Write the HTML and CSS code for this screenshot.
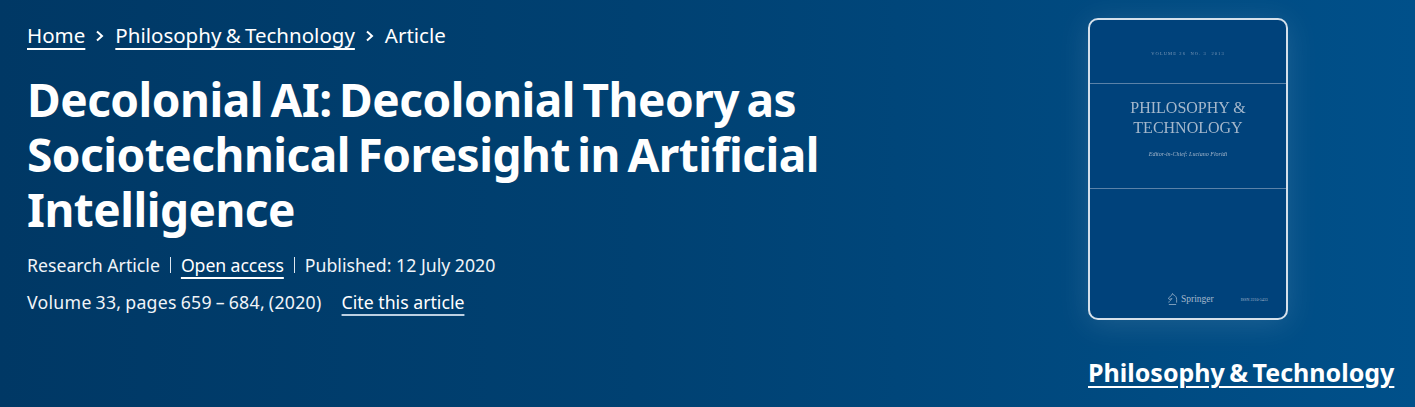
FILE: index.html
```html
<!DOCTYPE html>
<html lang="en">
<head>
  <meta charset="UTF-8" />
  <title>Decolonial AI</title>
  <link rel="stylesheet" href="styles.css">
</head>
<body>
  <header class="hero">
    <div class="main">
      <nav class="crumbs">
        <a href="#">Home</a>
        <svg class="chev" viewBox="0 0 10 14" width="10" height="14"><path d="M2 2.500l5 4.500-5 4.500" fill="none" stroke="#fff" stroke-width="2"/></svg>
        <a href="#">Philosophy &amp; Technology</a>
        <svg class="chev" viewBox="0 0 10 14" width="10" height="14"><path d="M2 2.500l5 4.500-5 4.500" fill="none" stroke="#fff" stroke-width="2"/></svg>
        <span>Article</span>
      </nav>
      <h1>Decolonial AI: Decolonial Theory as Sociotechnical Foresight in Artificial Intelligence</h1>
      <p class="meta">
        <span>Research Article</span><span class="bar"></span><a href="#">Open access</a><span class="bar"></span><span>Published: 12 July 2020</span>
      </p>
      <p class="meta second">
        <span class="pages">Volume 33, pages 659 – 684, (2020)</span><a class="cite" href="#">Cite this article</a>
      </p>
    </div>
    <aside class="journal">
      <div class="cover">
        <div class="vol">VOLUME 26 &nbsp;NO. 3 &nbsp;2013</div>
        <div class="band">
          <div class="cover-title">PHILOSOPHY &amp;<br>TECHNOLOGY</div>
          <div class="editor">Editor-in-Chief: Luciano Floridi</div>
        </div>
        <div class="foot">
          <svg class="horse" viewBox="0 0 12 14" width="11" height="14"><path d="M2 13h8M2 11c0-2 2.500-2.500 3.500-4.500L2.500 7.500 1.500 6 5 3l1-2 1 1.500c2 .5 3.500 2.500 3.500 5V11" fill="none" stroke="#a9bdd2" stroke-width="0.8"/></svg>
          <span class="springer">Springer</span>
          <span class="issn">ISSN 2210-5433</span>
        </div>
      </div>
      <a class="journal-name" href="#">Philosophy &amp; Technology</a>
    </aside>
  </header>
</body>
</html>
```

FILE: styles.css
```css
html, body {
  margin: 0;
  padding: 0;
}

body {
  font-family: "Noto Sans", "Open Sans", sans-serif;
  color: #fff;
  background: #004677;
}

a {
  color: #fff;
  text-decoration: underline;
  text-decoration-thickness: 1.5px;
  text-underline-offset: 5px;
}

.hero {
  display: flex;
  justify-content: space-between;
  height: 407px;
  box-sizing: border-box;
  padding: 18px 20px 0 27px;
  background: linear-gradient(90deg, #003865 0%, #004172 45%, #00508a 100%);
}

.main {
  width: 830px;
}

.crumbs {
  display: flex;
  align-items: center;
  gap: 10px;
  height: 34px;
  font-size: 20.5px;
  line-height: 26px;
  word-spacing: -1px;
}

.chev {
  margin-top: 2px;
}

h1 {
  margin: 20px 0 0;
  font-size: 46px;
  line-height: 55px;
  font-weight: 700;
  letter-spacing: -0.5px;
  word-spacing: -4px;
}

.meta {
  display: flex;
  align-items: center;
  margin: 16px 0 0;
  font-size: 17.7px;
  line-height: 24px;
  color: #f0f4f8;
}

.meta a {
  letter-spacing: -0.1px;
}

.second {
  margin-top: 13px;
}

.pages {
  word-spacing: -1px;
  letter-spacing: 0.28px;
}

.bar {
  width: 1px;
  height: 16px;
  margin: 0 10px;
  background: #dfe7ef;
}

.second .cite {
  margin-left: 20px;
  letter-spacing: 0;
  text-decoration-color: #bcd0e2;
}

.journal {
  width: 307px;
}

.cover {
  display: flex;
  flex-direction: column;
  width: 200px;
  height: 302px;
  box-sizing: border-box;
  border: 2px solid #d5e0eb;
  border-radius: 10px;
  background: #00427b;
  box-shadow: 0 4px 30px rgba(255, 255, 255, 0.12);
  font-family: "Liberation Serif", serif;
  color: #a5b8cc;
  text-align: center;
}

.vol {
  height: 63px;
  box-sizing: border-box;
  padding-top: 31px;
  font-size: 4.5px;
  letter-spacing: 1.1px;
  color: #7d9ab8;
  filter: blur(0.3px);
}

.band {
  height: 104px;
  border-top: 1px solid #5b82a8;
  border-bottom: 1px solid #5b82a8;
}

.cover-title {
  margin-top: 14px;
  font-size: 16px;
  line-height: 19.5px;
  filter: blur(0.3px);
}

.editor {
  margin-top: 14px;
  font-size: 6px;
  font-style: italic;
  filter: blur(0.2px);
}

.foot {
  display: flex;
  align-items: center;
  margin: auto 0 12px 77px;
  gap: 3px;
}

.springer {
  font-size: 9.5px;
}

.issn {
  margin-left: 24px;
  font-size: 4px;
}

.journal-name {
  display: inline-block;
  margin-top: 37px;
  font-size: 25px;
  line-height: 30px;
  font-weight: 700;
  word-spacing: -2px;
  text-underline-offset: 4px;
}
```
